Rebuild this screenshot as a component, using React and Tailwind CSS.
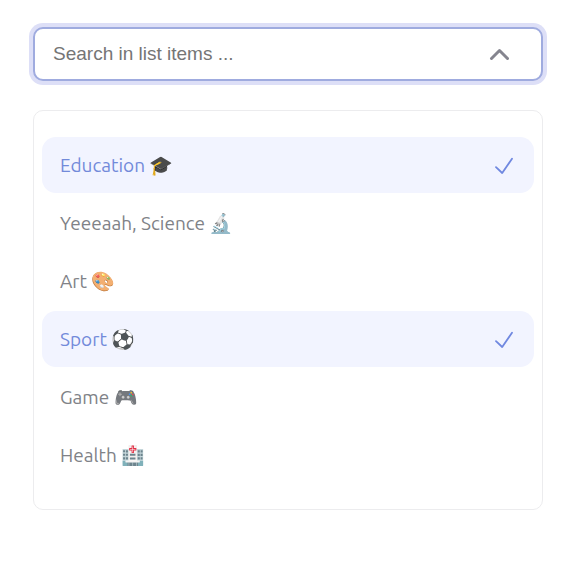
import { useState } from "react";

const ITEMS = [
  { name: "Education", emoji: "🎓" },
  { name: "Yeeeaah, Science", emoji: "🔬" },
  { name: "Art", emoji: "🎨" },
  { name: "Sport", emoji: "⚽" },
  { name: "Game", emoji: "🎮" },
  { name: "Health", emoji: "🏥" },
];

function Option({ item, checked, onToggle }) {
  return (
    <li>
      <label
        className={`flex h-14 cursor-pointer items-center justify-between rounded-[14px] pr-5 pl-[18px] text-[19px] leading-6 ${
          checked ? "bg-[#f2f4ff] text-[#728ada]" : "text-[#808287]"
        }`}
      >
        <span>
          {item.name} <span className={checked ? "opacity-95" : "opacity-85"}>{item.emoji}</span>
        </span>
        <input type="checkbox" className="size-0 appearance-none" checked={checked} onChange={onToggle} />
        {checked && (
          <svg className="h-5 w-5 shrink-0" viewBox="0 0 20 20" fill="none" stroke="#7088e0" strokeWidth="1.8" strokeLinecap="round" strokeLinejoin="round" aria-hidden="true">
            <path d="M2 12.2 8.2 18 18 3.8" />
          </svg>
        )}
      </label>
    </li>
  );
}

export default function App() {
  const [open, setOpen] = useState(true);
  const [query, setQuery] = useState("");
  const [selected, setSelected] = useState(["Education", "Sport"]);
  const toggle = (name) =>
    setSelected((s) => (s.includes(name) ? s.filter((n) => n !== name) : [...s, name]));
  const visible = ITEMS.filter((i) => i.name.toLowerCase().includes(query.toLowerCase()));

  return (
    <main className="flex flex-col gap-[29px] bg-white pt-[27px] pr-[27px] pb-6 pl-[33px] font-['Ubuntu','Noto_Sans',sans-serif]">
      <div className="flex h-[54px] items-center rounded-[10px] border-2 border-[#9fabdf] bg-white pr-8 pl-[18px] ring-4 ring-[#dddff7]">
        <input
          type="text"
          aria-label="Search in list items"
          placeholder="Search in list items ..."
          value={query}
          onChange={(e) => setQuery(e.target.value)}
          className="min-w-0 flex-1 bg-transparent font-['Liberation_Sans',sans-serif] text-[19px] leading-6 text-[#757575] outline-none placeholder:text-[#757575]"
        />
        <button type="button" aria-label="Toggle list" aria-expanded={open} onClick={() => setOpen(!open)}>
          <svg className="block h-5 w-5" viewBox="0 0 20 20" fill="none" stroke="#85858f" strokeWidth="3" strokeLinecap="round" strokeLinejoin="round" aria-hidden="true">
            <path d="M2.5 14.5 10.5 6.5 18.5 14.5" />
          </svg>
        </button>
      </div>
      {open && (
        <ul className="flex flex-col gap-0.5 rounded-[10px] border border-[#ececee] bg-white px-2 py-[26px]">
          {visible.map((item) => (
            <Option key={item.name} item={item} checked={selected.includes(item.name)} onToggle={() => toggle(item.name)} />
          ))}
        </ul>
      )}
    </main>
  );
}
